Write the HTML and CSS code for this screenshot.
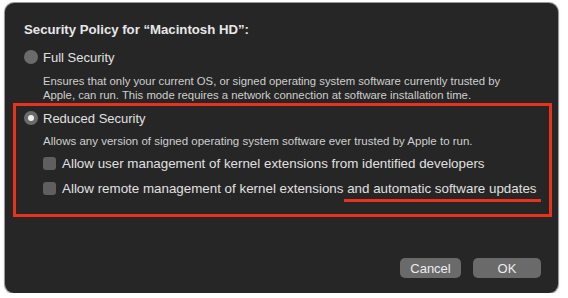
FILE: index.html
```html
<!DOCTYPE html>
<html lang="en">
<head>
    <meta charset="UTF-8">
    <title>Security Policy</title>
    <link rel="stylesheet" href="styles.css">
</head>
<body>
    <div class="dialog">
        <h1 class="title">Security Policy for “Macintosh HD”:</h1>

        <!-- Full Security -->
        <div class="option">
            <div class="option-row">
                <span class="radio"></span>
                <span class="option-label">Full Security</span>
            </div>
            <p class="option-desc">Ensures that only your current OS, or signed operating system software currently trusted by Apple, can run. This mode requires a network connection at software installation time.</p>
        </div>

        <!-- Reduced Security (highlighted) -->
        <div class="option option-marked">
            <div class="option-row">
                <span class="radio radio-on"></span>
                <span class="option-label">Reduced Security</span>
            </div>
            <p class="option-desc option-desc-small">Allows any version of signed operating system software ever trusted by Apple to run.</p>
            <div class="check-row">
                <span class="checkbox"></span>
                <span class="check-label">Allow user management of kernel extensions from identified developers</span>
            </div>
            <div class="check-row">
                <span class="checkbox"></span>
                <span class="check-label">Allow remote management of kernel extensions <span class="underlined">and automatic software updates</span></span>
            </div>
        </div>

        <div class="actions">
            <button class="btn">Cancel</button>
            <button class="btn btn-ok">OK</button>
        </div>
    </div>
</body>
</html>
```

FILE: styles.css
```css
* {
    margin: 0;
    padding: 0;
    box-sizing: border-box;
}

body {
    background: #ffffff;
    font-family: "Liberation Sans", Arial, sans-serif;
    color: #dedede;
}

.dialog {
    margin: 3px 0 0 5px;
    width: 553px;
    height: 290px;
    background: #262626;
    border-radius: 9px;
    box-shadow: 0 0 0 1px #9a9a9a, 0 1px 3px rgba(0, 0, 0, 0.3);
    padding: 18px 6px 0 8px;
    display: flex;
    flex-direction: column;
}

.title {
    font-size: 13.2px;
    font-weight: bold;
    color: #e8e8e8;
    margin-left: 11px;
    line-height: 17px;
}

.option {
    padding: 10px 0 0 11px;
}

.option-row {
    display: flex;
    align-items: center;
    gap: 5px;
    height: 18px;
}

.radio {
    width: 14px;
    height: 14px;
    border-radius: 50%;
    background: #6b6b6b;
    display: flex;
    align-items: center;
    justify-content: center;
}

.radio-on::after {
    content: "";
    width: 6px;
    height: 6px;
    border-radius: 50%;
    background: #f0f0f0;
}

.option-label {
    font-size: 13px;
    color: #e0e0e0;
}

.option-desc {
    font-size: 11.3px;
    line-height: 13.5px;
    color: #cfcfcf;
    margin: 9px 0 0 19px;
    width: 476px;
}

.option-marked {
    margin: 1px 0 0 0;
    border: 3px solid #e8321c;
    height: 114px;
    padding: 3px 0 0 8px;
}

.option-desc-small {
    font-size: 11.5px;
    margin-top: 8px;
    width: auto;
}

.check-row {
    display: flex;
    align-items: center;
    gap: 6px;
    margin: 5px 0 0 19px;
    height: 20px;
}

.checkbox {
    width: 13px;
    height: 13px;
    border-radius: 3px;
    background: #5f5f5f;
}

.check-label {
    font-size: 13.37px;
    color: #e0e0e0;
}

.underlined {
    position: relative;
}

.underlined::after {
    content: "";
    position: absolute;
    left: -3px;
    right: -4px;
    bottom: -6px;
    height: 3px;
    background: #e8321c;
}

.actions {
    margin-top: auto;
    margin-bottom: 15px;
    display: flex;
    justify-content: flex-end;
    gap: 12px;
    padding-right: 11px;
}

.btn {
    height: 20px;
    border: none;
    border-radius: 5px;
    background: #6a6a6a;
    color: #ececec;
    font-family: "Liberation Sans", Arial, sans-serif;
    font-size: 13px;
    width: 61px;
}

.btn-ok {
    width: 68px;
}
```
